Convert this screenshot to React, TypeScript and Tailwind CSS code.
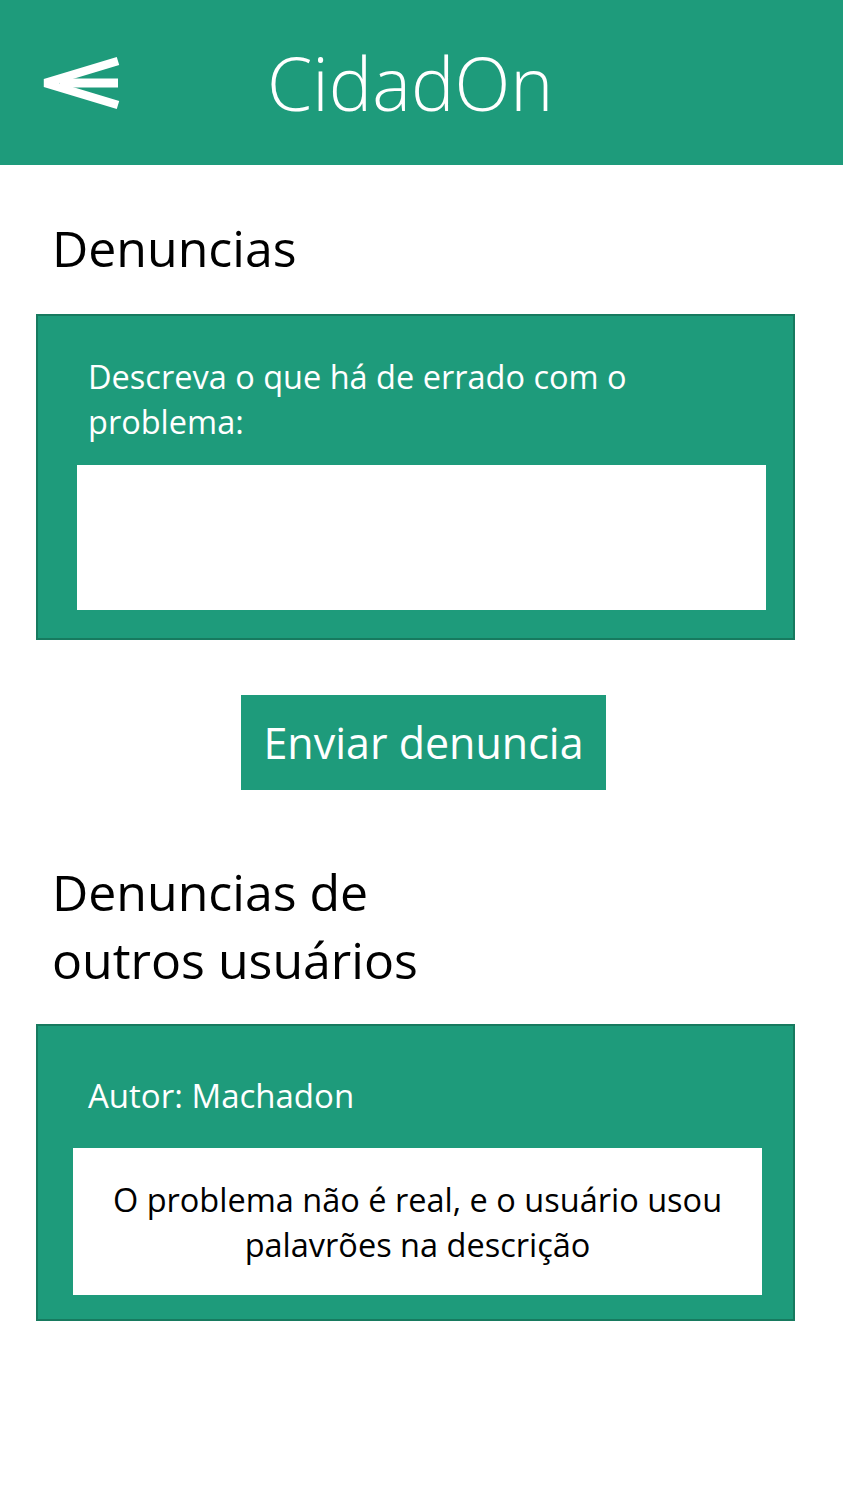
const font = { fontFamily: '"Open Sans", "Noto Sans", sans-serif' };

function BackArrow() {
  return (
    <svg width="80" height="60" viewBox="0 0 80 60" className="shrink-0">
      <path d="M78 8 L5 30 L78 52" fill="none" stroke="#ffffff" strokeWidth="8.5" strokeLinejoin="bevel" />
      <path d="M20 30 L78 30" fill="none" stroke="#ffffff" strokeWidth="9" />
    </svg>
  );
}

export default function App() {
  return (
    <div className="w-[843px] min-h-[1500px] bg-white text-black" style={font}>
      {/* Topo */}
      <header className="h-[165px] bg-[#1e9b7b] flex items-center pl-[40px]">
        <BackArrow />
        <h1 className="ml-[147px] text-[73px] leading-none font-light text-white">CidadOn</h1>
      </header>

      <h2 className="mt-[53px] pl-[52px] text-[50px] leading-[60px]">Denuncias</h2>

      {/* Nova denuncia */}
      <section className="mt-[36px] ml-[36px] w-[759px] border-2 border-[#177a5f] bg-[#1e9b7b] pt-[38px] pb-[28px]">
        <p className="pl-[50px] w-[630px] text-[32.5px] leading-[45px] text-white">
          Descreva o que há de errado com o problema:
        </p>
        <div className="mt-[21px] ml-[39px] mr-[27px] h-[145px] bg-white" />
      </section>

      <div className="mt-[55px] flex justify-center">
        <button className="ml-[4px] w-[365px] h-[95px] bg-[#1e9b7b] text-white text-[43px] leading-none flex items-center justify-center">
          Enviar denuncia
        </button>
      </div>

      <h2 className="mt-[68px] pl-[52px] text-[50px] leading-[68px]">
        Denuncias de
        <br />
        outros usuários
      </h2>

      {/* Denuncias de outros */}
      <section className="mt-[30px] ml-[36px] w-[759px] border-2 border-[#177a5f] bg-[#1e9b7b] pt-[47px] pb-[24px]">
        <p className="pl-[50px] text-[33px] leading-[45px] text-white">Autor: Machadon</p>
        <div className="mt-[30px] ml-[35px] mr-[31px] h-[147px] bg-white flex items-center justify-center">
          <p className="text-center text-[32.5px] leading-[45px] px-[20px]">
            O problema não é real, e o usuário usou palavrões na descrição
          </p>
        </div>
      </section>
    </div>
  );
}
